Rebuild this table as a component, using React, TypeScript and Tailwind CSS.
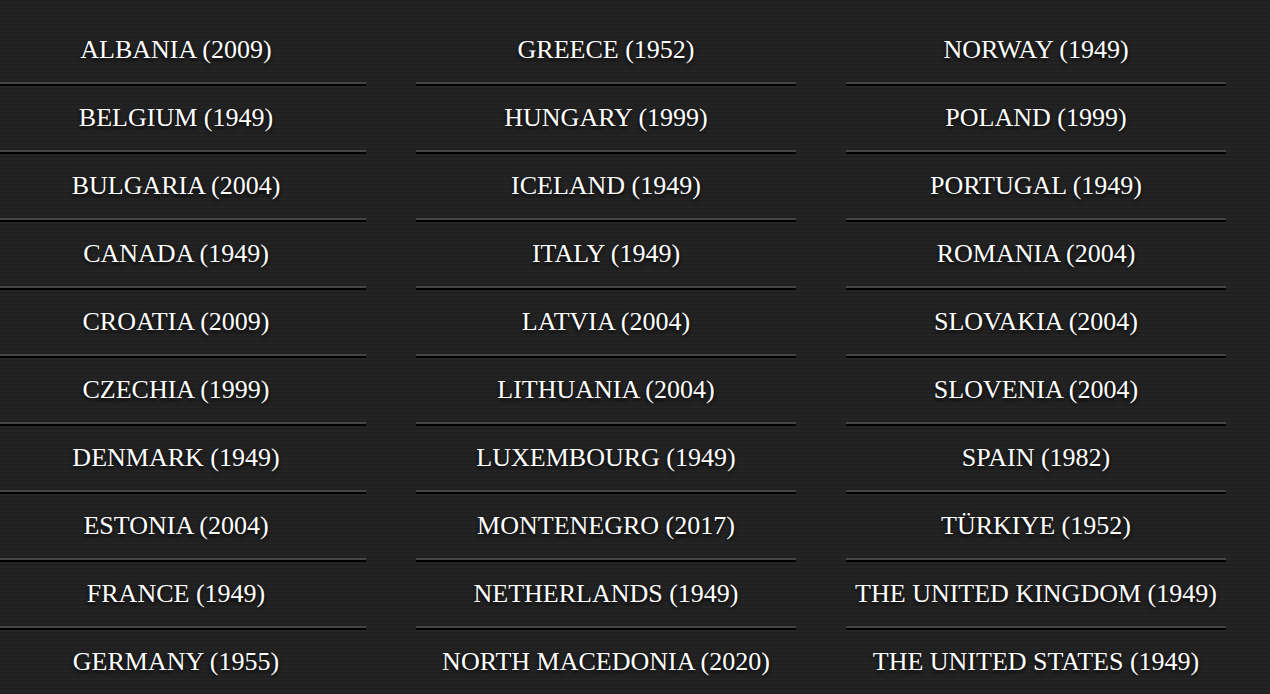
import React from "react";

const cols: string[][] = [
  [
    "ALBANIA (2009)",
    "BELGIUM (1949)",
    "BULGARIA (2004)",
    "CANADA (1949)",
    "CROATIA (2009)",
    "CZECHIA (1999)",
    "DENMARK (1949)",
    "ESTONIA (2004)",
    "FRANCE (1949)",
    "GERMANY (1955)",
  ],
  [
    "GREECE (1952)",
    "HUNGARY (1999)",
    "ICELAND (1949)",
    "ITALY (1949)",
    "LATVIA (2004)",
    "LITHUANIA (2004)",
    "LUXEMBOURG (1949)",
    "MONTENEGRO (2017)",
    "NETHERLANDS (1949)",
    "NORTH MACEDONIA (2020)",
  ],
  [
    "NORWAY (1949)",
    "POLAND (1999)",
    "PORTUGAL (1949)",
    "ROMANIA (2004)",
    "SLOVAKIA (2004)",
    "SLOVENIA (2004)",
    "SPAIN (1982)",
    "TÜRKIYE (1952)",
    "THE UNITED KINGDOM (1949)",
    "THE UNITED STATES (1949)",
  ],
];

export default function App() {
  return (
    <div className="w-[1270px] h-[694px] overflow-hidden bg-[#212121] bg-[repeating-linear-gradient(180deg,#202020_0px,#202020_2px,#242424_2px,#242424_4px)] font-['Liberation_Serif','Times_New_Roman',serif]">
      <div className="flex gap-[50px] -ml-[14px] pt-[18px]">
        {cols.map((col, ci) => (
          <div key={ci} className="w-[380px] shrink-0 flex flex-col">
            {col.map((name) => (
              <div key={name} className="flex flex-col">
                <div className="h-[64px] flex items-center justify-center text-white text-[26px] leading-none whitespace-nowrap [text-shadow:0_2px_4px_rgba(0,0,0,0.95)]">
                  {name}
                </div>
                <div className="h-[2px] bg-[#454545]" />
                <div className="h-[2px] bg-black" />
              </div>
            ))}
          </div>
        ))}
      </div>
    </div>
  );
}
